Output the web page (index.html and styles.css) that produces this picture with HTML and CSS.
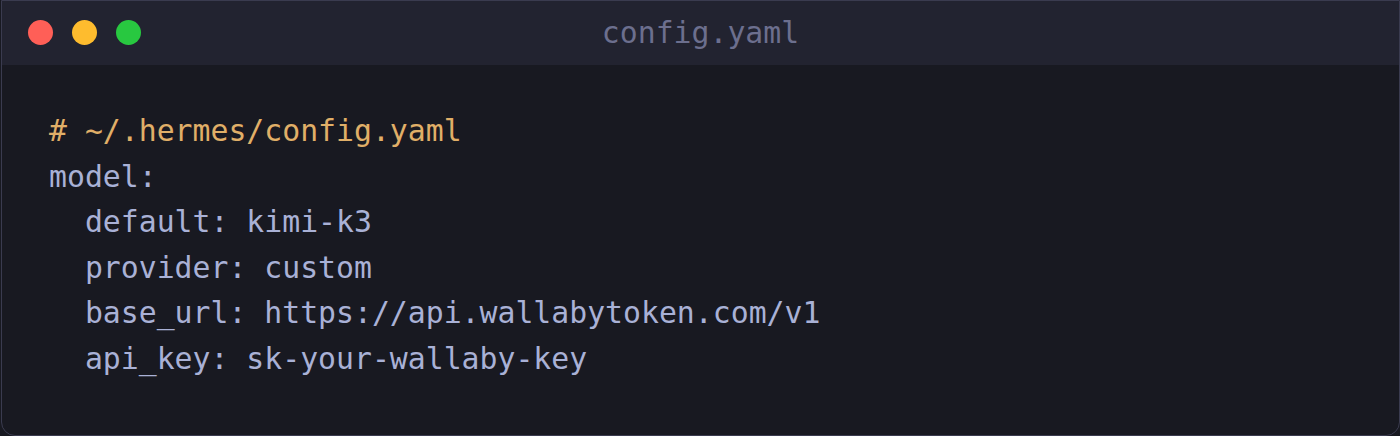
FILE: index.html
```html
<!DOCTYPE html>
<html lang="en">
<head>
<meta charset="utf-8">
<title>config.yaml</title>
<link rel="stylesheet" href="styles.css">
</head>
<body>
<div class="window">
  <div class="titlebar">
    <div class="lights">
      <span class="light red"></span>
      <span class="light yellow"></span>
      <span class="light green"></span>
    </div>
    <div class="title">config.yaml</div>
  </div>
  <pre class="code"><span class="comment"># ~/.hermes/config.yaml</span>
model:
  default: kimi-k3
  provider: custom
  base_url: https://api.wallabytoken.com/v1
  api_key: sk-your-wallaby-key</pre>
</div>
</body>
</html>
```
FILE: styles.css
```css
html, body {
  margin: 0;
  padding: 0;
  background: #181921;
}
.window {
  box-sizing: border-box;
  width: 1399px;
  height: 436px;
  margin-left: 1px;
  border: 1px solid #3a3b4f;
  border-radius: 0 0 14px 14px;
  background: #181921;
  overflow: hidden;
  display: flex;
  flex-direction: column;
}
.titlebar {
  position: relative;
  height: 64px;
  flex: none;
  background: #222330;
  display: flex;
  align-items: center;
}
.lights {
  display: flex;
  gap: 19px;
  padding-left: 26px;
  margin-top: -2px;
}
.light {
  width: 25px;
  height: 25px;
  border-radius: 50%;
  display: block;
}
.red { background: #ff5f57; }
.yellow { background: #febc2e; }
.green { background: #28c840; }
.title {
  position: absolute;
  left: 0;
  right: 0;
  top: 0;
  bottom: 0;
  display: flex;
  align-items: center;
  justify-content: center;
  margin-top: -2px;
  font-family: "DejaVu Sans Mono", monospace;
  font-size: 29.8px;
  color: #6c6f8e;
}
.code {
  margin: 0;
  padding: 43px 0 0 47px;
  font-family: "DejaVu Sans Mono", monospace;
  font-size: 29.8px;
  line-height: 45.6px;
  color: #a9b1d6;
}
.comment {
  color: #e0af68;
}
```
